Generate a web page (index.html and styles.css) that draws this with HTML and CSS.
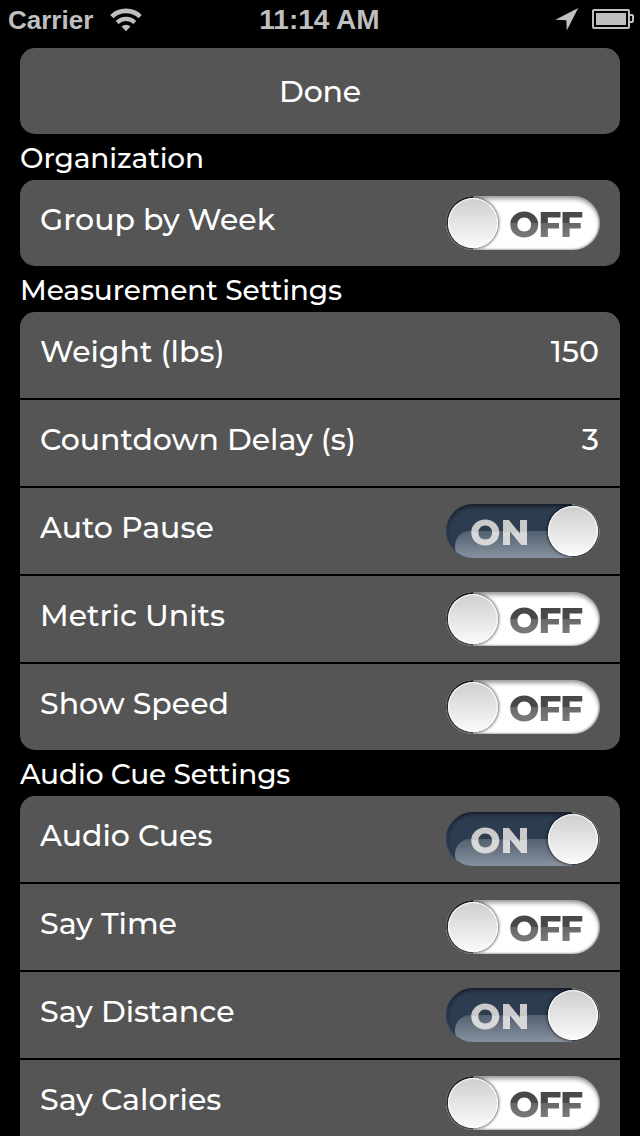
FILE: index.html
```html
<!DOCTYPE html>
<html lang="en">
<head>
    <meta charset="UTF-8">
    <meta name="viewport" content="width=device-width, initial-scale=1.0">
    <title>Settings</title>
    <link rel="stylesheet" href="styles.css">
</head>
<body>
    <!-- Status bar -->
    <header class="status-bar">
        <div class="status-left">
            <span class="carrier">Carrier</span>
            <svg class="wifi" width="32" height="24" viewBox="0 0 32 24" fill="none" stroke="#bfbfbf">
                <path d="M1.8 8.6 A20.5 20.5 0 0 1 30.2 8.6" stroke-width="4.6"/>
                <path d="M7.2 14.6 A12.4 12.4 0 0 1 24.8 14.6" stroke-width="4.2"/>
                <path d="M16 23.2 L11.5 18.6 A6.6 6.6 0 0 1 20.5 18.6 Z" fill="#bfbfbf" stroke="none"/>
            </svg>
        </div>
        <span class="clock">11:14 AM</span>
        <div class="status-right">
            <svg width="24" height="24" viewBox="0 0 24 24">
                <path d="M23.2 0 L11.8 22.6 L11.3 12.2 L0.4 11.7 Z" fill="#bfbfbf"/>
            </svg>
            <svg width="42" height="20" viewBox="0 0 42 20" fill="none" stroke="#bfbfbf" stroke-width="2">
                <rect x="1" y="1" width="36" height="18" rx="1"/>
                <rect x="4" y="4" width="30" height="12" fill="#bfbfbf" stroke="none"/>
                <path d="M38 6 H40 Q41 6 41 7 V12 Q41 13 40 13 H38"/>
            </svg>
        </div>
    </header>

    <main class="settings">
        <button class="done-btn">Done</button>

        <h2>Organization</h2>
        <div class="group">
            <div class="row">
                <span class="label">Group by Week</span>
                <div class="switch off"><span class="switch-text">OFF</span><span class="knob"></span></div>
            </div>
        </div>

        <h2>Measurement Settings</h2>
        <div class="group">
            <div class="row">
                <span class="label">Weight (lbs)</span>
                <span class="value">150</span>
            </div>
            <div class="row">
                <span class="label">Countdown Delay (s)</span>
                <span class="value">3</span>
            </div>
            <div class="row">
                <span class="label">Auto Pause</span>
                <div class="switch on"><span class="switch-text">ON</span><span class="knob"></span></div>
            </div>
            <div class="row">
                <span class="label">Metric Units</span>
                <div class="switch off"><span class="switch-text">OFF</span><span class="knob"></span></div>
            </div>
            <div class="row">
                <span class="label">Show Speed</span>
                <div class="switch off"><span class="switch-text">OFF</span><span class="knob"></span></div>
            </div>
        </div>

        <h2>Audio Cue Settings</h2>
        <div class="group group-open">
            <div class="row">
                <span class="label">Audio Cues</span>
                <div class="switch on"><span class="switch-text">ON</span><span class="knob"></span></div>
            </div>
            <div class="row">
                <span class="label">Say Time</span>
                <div class="switch off"><span class="switch-text">OFF</span><span class="knob"></span></div>
            </div>
            <div class="row">
                <span class="label">Say Distance</span>
                <div class="switch on"><span class="switch-text">ON</span><span class="knob"></span></div>
            </div>
            <div class="row">
                <span class="label">Say Calories</span>
                <div class="switch off"><span class="switch-text">OFF</span><span class="knob"></span></div>
            </div>
        </div>
    </main>
</body>
</html>
```
FILE: styles.css
```css
* {
    box-sizing: border-box;
}

body {
    font-family: Montserrat, Inter, sans-serif;
    margin: 0;
    height: 1136px;
    overflow: hidden;
    background-color: #000;
    color: #fff;
}

/* Status bar */
.status-bar {
    display: grid;
    grid-template-columns: 1fr auto 1fr;
    height: 40px;
    padding: 0 6px 0 8px;
    font-family: "Liberation Sans", Arial, sans-serif;
    font-size: 26px;
    font-weight: bold;
    line-height: 40px;
    color: #bfbfbf;
}

.clock {
    font-size: 28px;
    line-height: 39px;
    padding-right: 3px;
}

.status-left,
.status-right {
    display: flex;
    align-items: flex-start;
}

.status-left {
    gap: 17px;
}

.wifi {
    margin-top: 8px;
}

.status-right {
    justify-content: flex-end;
    gap: 13px;
    padding-top: 8px;
}

.status-right svg:last-child {
    margin-top: 1px;
}

/* Settings list */
.settings {
    padding: 8px 20px 0;
}

.done-btn {
    display: block;
    width: 100%;
    height: 86px;
    padding: 0;
    border: none;
    border-radius: 15px;
    background-color: #555;
    color: #fff;
    font-family: inherit;
    font-size: 30px;
    font-weight: 500;
    letter-spacing: -0.2px;
}

h2 {
    height: 46px;
    margin: 0;
    font-size: 28px;
    font-weight: 500;
    line-height: 49px;
    letter-spacing: -0.1px;
    white-space: nowrap;
}

.group {
    border-radius: 15px;
    overflow: hidden;
}

/* The last list carries on past the bottom edge of the screen */
.group-open {
    border-radius: 15px 15px 0 0;
}

.row {
    display: flex;
    justify-content: space-between;
    height: 86px;
    padding: 16px 20px;
    background-color: #555;
    font-size: 30px;
    font-weight: 500;
    line-height: 48px;
}

.row + .row {
    margin-top: 2px;
}

.value {
    padding-right: 1px;
}

/* Switches */
.switch {
    position: relative;
    width: 154px;
    height: 54px;
    border-radius: 27px;
    overflow: hidden;
    font-size: 36px;
    font-weight: 800;
    line-height: 57px;
}

.switch.off {
    padding-left: 63px;
    background-color: #fff;
    box-shadow: inset 0 3px 4px rgba(0, 0, 0, 0.4), inset -1px -1px 2px rgba(0, 0, 0, 0.3);
    letter-spacing: -1.3px;
}

.switch.on {
    padding-left: 24px;
    background: #2c3d50;
    box-shadow: inset 0 2px 4px rgba(0, 0, 0, 0.65), inset 1px 0 1px #3d5a77;
}

/* Glossy lower half */
.switch.on::before {
    content: "";
    position: absolute;
    left: 9px;
    right: 0;
    bottom: 0;
    height: 27px;
    border-radius: 15px 0 0 10px;
    background: linear-gradient(#53606f, #8792a0);
}

/* Thin rim that shows round the knob */
.switch::after {
    content: "";
    position: absolute;
    top: 0;
    width: 27px;
    height: 54px;
}

.switch.on::after {
    right: 0;
    border: 1px solid #aaa;
    border-left: none;
    border-radius: 0 27px 27px 0;
    background-color: #666;
}

.switch.off::after {
    left: 0;
    border-radius: 27px 0 0 27px;
    background: linear-gradient(#1c2736, #65707d);
}

.switch-text {
    position: relative;
    display: inline-block;
    padding-right: 3px;
    -webkit-background-clip: text;
    background-clip: text;
    color: transparent;
}

.off .switch-text {
    background-image: linear-gradient(#484848 48%, #686868 48%, #7c7c7c 75%);
}

.on .switch-text {
    background-image: linear-gradient(#cacaca 50%, #d8d8d8 50%);
}

.knob {
    position: absolute;
    z-index: 1;
    top: 2px;
    width: 50px;
    height: 50px;
    border-radius: 50%;
    background: linear-gradient(#cecece, #fbfbfb);
    box-shadow: inset 0 0 1px 1px #fff, 0 0 3px 1px rgba(0, 0, 0, 0.6);
}

.off .knob {
    left: 2px;
}

.on .knob {
    right: 2px;
}
```
